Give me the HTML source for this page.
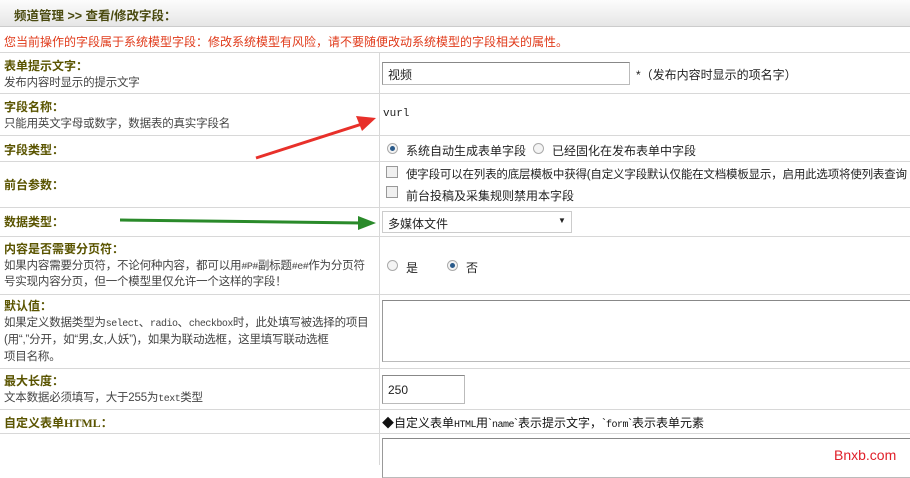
<!DOCTYPE html>
<html><head><meta charset="utf-8"><style>
*{margin:0;padding:0;box-sizing:border-box}
body{width:910px;height:465px;overflow:hidden;background:#fff;font-family:"Liberation Sans","Noto Sans CJK SC",sans-serif;font-size:12px;color:#333;position:relative}
.a{position:absolute;white-space:nowrap}
.h{height:1px;left:0;width:910px;background:#d8d8d8}
.lb{font-weight:bold;color:#5a5400;font-size:12px}
.ds{color:#444;font-size:11.5px;letter-spacing:-0.2px;max-width:376px;overflow:hidden}
.m{font-family:"Liberation Mono",monospace;font-size:10px;letter-spacing:-0.5px}
.box{position:absolute;border:1px solid #bbb;border-top-color:#888;border-left-color:#999;background:#fff}
.rad{position:absolute;width:11px;height:11px;border-radius:50%;border:1px solid #aaa;background:#f4f4f4}
.rad.on::after{content:"";position:absolute;left:2px;top:2px;width:5px;height:5px;border-radius:50%;background:#2a5a8a}
.chk{position:absolute;width:12px;height:12px;border:1px solid #999;background:#f0f0f0}
</style></head><body>
<div class="a" style="left:0;top:0;width:910px;height:27px;background:linear-gradient(#fcfcfc,#e6e6e6);border-bottom:1px solid #ccc"></div>
<div class="a" style="left:14px;top:5px;font-weight:bold;color:#4a4a10;font-size:12.5px">频道管理 &gt;&gt; 查看/修改字段：</div>
<div class="a h" style="top:52px"></div>
<div class="a" style="left:4px;top:33px;color:#e03a1a">您当前操作的字段属于系统模型字段：修改系统模型有风险，请不要随便改动系统模型的字段相关的属性。</div>
<div class="a" style="left:379px;top:53px;width:1px;height:412px;background:#d8d8d8"></div>
<div class="a h" style="top:93px"></div><div class="a h" style="top:135px"></div><div class="a h" style="top:161px"></div><div class="a h" style="top:207px"></div><div class="a h" style="top:236px"></div><div class="a h" style="top:294px"></div><div class="a h" style="top:368px"></div><div class="a h" style="top:409px"></div><div class="a h" style="top:433px"></div>

<div class="a lb" style="left:4px;top:57px">表单提示文字：</div>
<div class="a ds" style="left:4px;top:74px">发布内容时显示的提示文字</div>
<div class="box" style="left:382px;top:62px;width:248px;height:23px"></div>
<div class="a" style="left:388px;top:66px;color:#222">视频</div>
<div class="a" style="left:636px;top:66px;color:#222">*（发布内容时显示的项名字）</div>

<div class="a lb" style="left:4px;top:98px">字段名称：</div>
<div class="a ds" style="left:4px;top:115px">只能用英文字母或数字，数据表的真实字段名</div>
<div class="a" style="left:383px;top:108px;font-family:'Liberation Mono',monospace;font-size:11px;color:#222">vurl</div>

<div class="a lb" style="left:4px;top:141px">字段类型：</div>
<div class="rad on" style="left:387px;top:143px"></div>
<div class="a" style="left:406px;top:142px;color:#222">系统自动生成表单字段</div>
<div class="rad" style="left:533px;top:143px"></div>
<div class="a" style="left:552px;top:142px;color:#222">已经固化在发布表单中字段</div>

<div class="a lb" style="left:4px;top:176px">前台参数：</div>
<div class="chk" style="left:386px;top:166px"></div>
<div class="a" style="left:406px;top:166px;color:#222;font-size:11.5px;letter-spacing:-0.2px">使字段可以在列表的底层模板中获得(自定义字段默认仅能在文档模板显示，启用此选项将使列表查询</div>
<div class="chk" style="left:386px;top:186px"></div>
<div class="a" style="left:406px;top:187px;color:#222">前台投稿及采集规则禁用本字段</div>

<div class="a lb" style="left:4px;top:213px">数据类型：</div>
<div class="box" style="left:382px;top:211px;width:190px;height:22px;border-color:#ccc"></div>
<div class="a" style="left:388px;top:215px;color:#222">多媒体文件</div>
<div class="a" style="left:558px;top:216px;font-size:8px;color:#222">▼</div>

<div class="a lb" style="left:4px;top:240px">内容是否需要分页符：</div>
<div class="a ds" style="left:4px;top:257px">如果内容需要分页符，不论何种内容，都可以用<span class="m">#P#</span>副标题<span class="m">#e#</span>作为分页符</div>
<div class="a ds" style="left:4px;top:273px">号实现内容分页，但一个模型里仅允许一个这样的字段！</div>
<div class="rad" style="left:387px;top:260px"></div>
<div class="a" style="left:406px;top:259px;color:#222">是</div>
<div class="rad on" style="left:447px;top:260px"></div>
<div class="a" style="left:466px;top:259px;color:#222">否</div>

<div class="a lb" style="left:4px;top:297px">默认值：</div>
<div class="a ds" style="left:4px;top:314px">如果定义数据类型为<span class="m">select</span>、<span class="m">radio</span>、<span class="m">checkbox</span>时，此处填写被选择的项目</div>
<div class="a ds" style="left:4px;top:331px">(用“,”分开，如“男,女,人妖”)，如果为联动选框，这里填写联动选框</div>
<div class="a ds" style="left:4px;top:348px">项目名称。</div>
<div class="box" style="left:382px;top:300px;width:540px;height:62px"></div>

<div class="a lb" style="left:4px;top:372px">最大长度：</div>
<div class="a ds" style="left:4px;top:389px">文本数据必须填写，大于255为<span class="m">text</span>类型</div>
<div class="box" style="left:382px;top:375px;width:83px;height:29px"></div>
<div class="a" style="left:388px;top:383px;color:#222">250</div>

<div class="a lb" style="left:4px;top:414px">自定义表单<span style="font-family:'Liberation Serif',serif">HTML</span>：</div>
<div class="a" style="left:382px;top:414px;color:#111">◆自定义表单<span class="m">HTML</span>用`<span class="m">name</span>`表示提示文字，`<span class="m">form</span>`表示表单元素</div>
<div class="box" style="left:382px;top:438px;width:540px;height:40px"></div>
<div class="a" style="left:834px;top:447px;color:#e0202a;font-size:14px">Bnxb.com</div>

<svg class="a" style="left:0;top:0" width="910" height="465">
<path d="M256 158 L362 124" stroke="#e8302a" stroke-width="3" fill="none"/>
<polygon points="376,118 356,116 362,131" fill="#e8302a"/>
<path d="M120 220 L362 223" stroke="#2a8a2a" stroke-width="3" fill="none"/>
<polygon points="376,223 358,216 358,230" fill="#2a8a2a"/>
</svg>
</body></html>
